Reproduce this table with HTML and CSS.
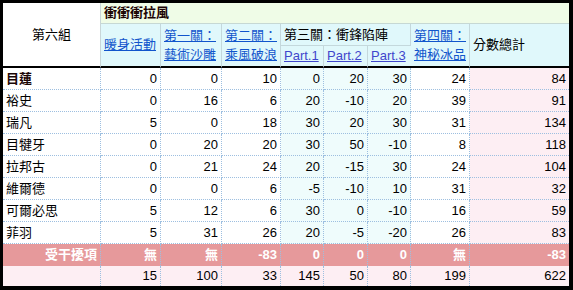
FILE: index.html
```html
<!DOCTYPE html>
<html lang="zh-Hant">
<head>
<meta charset="utf-8">
<link rel="stylesheet" href="styles.css">
</head>
<body>
<div class="sheet">
<table class="grid">
<colgroup>
<col class="w98"><col class="w60"><col class="w61"><col class="w59"><col class="w43"><col class="w44"><col class="w43"><col class="w59"><col class="w99">
</colgroup>
<tbody>
<tr class="h-top">
<td class="group" rowspan="3">第六組</td>
<td class="team" colspan="8">衝衝衝拉風</td>
</tr>
<tr class="h-mid">
<td class="hd" rowspan="2"><a href="#">暖身活動</a></td>
<td class="hd wrap" rowspan="2"><a href="#">第一關：藝術沙雕</a></td>
<td class="hd wrap" rowspan="2"><a href="#">第二關：乘風破浪</a></td>
<td class="hd" colspan="3">第三關：衝鋒陷陣</td>
<td class="hd wrap" rowspan="2"><a href="#">第四關：神秘冰品</a></td>
<td class="hd" rowspan="2">分數總計</td>
</tr>
<tr class="h-bot">
<td class="hd"><a class="part" href="#">Part.1</a></td>
<td class="hd"><a class="part" href="#">Part.2</a></td>
<td class="hd"><a class="part" href="#">Part.3</a></td>
</tr>
<tr class="row first"><td class="name bold">目蓮</td><td>0</td><td>0</td><td>10</td><td class="cy">0</td><td class="cy">20</td><td class="cy">30</td><td>24</td><td class="pk">84</td></tr>
<tr class="row"><td class="name">裕史</td><td>0</td><td>16</td><td>6</td><td class="cy">20</td><td class="cy">-10</td><td class="cy">20</td><td>39</td><td class="pk">91</td></tr>
<tr class="row"><td class="name">瑞凡</td><td>5</td><td>0</td><td>18</td><td class="cy">30</td><td class="cy">20</td><td class="cy">30</td><td>31</td><td class="pk">134</td></tr>
<tr class="row"><td class="name">目犍牙</td><td>0</td><td>20</td><td>20</td><td class="cy">30</td><td class="cy">50</td><td class="cy">-10</td><td>8</td><td class="pk">118</td></tr>
<tr class="row"><td class="name">拉邦古</td><td>0</td><td>21</td><td>24</td><td class="cy">20</td><td class="cy">-15</td><td class="cy">30</td><td>24</td><td class="pk">104</td></tr>
<tr class="row"><td class="name">維爾德</td><td>0</td><td>0</td><td>6</td><td class="cy">-5</td><td class="cy">-10</td><td class="cy">10</td><td>31</td><td class="pk">32</td></tr>
<tr class="row"><td class="name">可爾必思</td><td>5</td><td>12</td><td>6</td><td class="cy">30</td><td class="cy">0</td><td class="cy">-10</td><td>16</td><td class="pk">59</td></tr>
<tr class="row"><td class="name">菲羽</td><td>5</td><td>31</td><td>26</td><td class="cy">20</td><td class="cy">-5</td><td class="cy">-20</td><td>26</td><td class="pk">83</td></tr>
<tr class="row penalty"><td>受干擾項</td><td>無</td><td>無</td><td>-83</td><td>0</td><td>0</td><td>0</td><td>無</td><td>-83</td></tr>
<tr class="row total"><td></td><td>15</td><td>100</td><td>33</td><td>145</td><td>50</td><td>80</td><td>199</td><td>622</td></tr>
</tbody>
</table>
</div>
</body>
</html>
```
FILE: styles.css
```css
html, body {
  margin: 0;
  padding: 0;
  background: #fff;
}
.sheet {
  box-sizing: border-box;
  width: 573px;
  height: 290px;
  border-style: solid;
  border-color: #000;
  border-width: 3px 4px 4px 3px;
  overflow: hidden;
  background: #fff;
}
.grid {
  border-collapse: separate;
  border-spacing: 0;
  table-layout: fixed;
  width: 566px;
  font-family: "Liberation Sans", "Noto Sans CJK TC", Arial, sans-serif;
  font-size: 13px;
  line-height: 16px;
  color: #000;
}
.w98 { width: 98px; }
.w60 { width: 60px; }
.w61 { width: 61px; }
.w59 { width: 59px; }
.w43 { width: 43px; }
.w44 { width: 44px; }
.w99 { width: 99px; }
.grid td {
  box-sizing: border-box;
  padding: 0 3px;
  white-space: nowrap;
  overflow: hidden;
}
.h-top { height: 21px; }
.h-mid { height: 22px; }
.h-bot { height: 22px; }
.group {
  text-align: center;
  vertical-align: middle;
  background: #fff;
  border-right: 1px solid #c9d6d8;
  border-bottom: 2px solid #000;
}
.team {
  background: #effce7;
  font-weight: bold;
  color: #1c0404;
  border-bottom: 1px solid #c6d8d4;
  vertical-align: middle;
}
.hd {
  background: #e0f8fb;
  vertical-align: middle;
  border-right: 1px solid #c4d8dc;
  border-bottom: 1px solid #c4d8dc;
}
.h-bot .hd,
.h-mid .hd[rowspan="2"] {
  border-bottom: 2px solid #000;
}
.hd:last-child { border-right: none; }
.h-mid .hd:last-child { border-right: none; }
.wrap {
  white-space: normal !important;
  line-height: 19px;
}
.hd a {
  color: #1155cc;
  text-decoration: underline;
}
.hd a.part {
  color: #3f46cc;
}
.row { height: 22px; }
.row td {
  text-align: right;
  vertical-align: middle;
  border-right: 1px dotted #9dbfe0;
  border-bottom: 1px dotted #9dbfe0;
}
.row td:last-child { border-right: none; }
.row td.name { text-align: left; }
.row td.bold { font-weight: bold; color: #1a0606; }
.row td.cy { background: #effcfc; }
.row td.pk { background: #fdeef3; }
.penalty td {
  background: #e6999b;
  color: #fff;
  font-weight: bold;
  border-bottom: none !important;
}
.total { height: 20px; }
.total td {
  background: #fdeef3;
  border-bottom: none !important;
}
```
